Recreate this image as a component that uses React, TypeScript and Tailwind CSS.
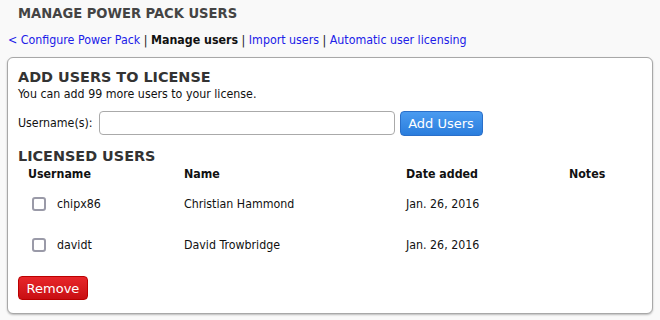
import React from 'react';

const users = [
  { username: 'chipx86', name: 'Christian Hammond', date: 'Jan. 26, 2016' },
  { username: 'davidt', name: 'David Trowbridge', date: 'Jan. 26, 2016' },
];

export default function App() {
  return (
    <div className="w-[660px] h-[320px] bg-[#f9f9f9] text-[#111] font-['DejaVu_Sans_Condensed','DejaVu_Sans',Verdana,sans-serif] text-[12.3px] overflow-hidden">
      {/* Page header */}
      <h1 className="pl-[18px] pt-[4px] h-[29px] text-[14.6px] font-bold text-[#444] leading-[18px]">
        MANAGE POWER PACK USERS
      </h1>
      <nav className="pl-[8px] pt-[2px] h-[28px] leading-[18px]">
        <a className="text-[#2020e8]">&lt; Configure Power Pack</a>
        <span> | </span>
        <b>Manage users</b>
        <span> | </span>
        <a className="text-[#2020e8]">Import users</a>
        <span> | </span>
        <a className="text-[#2020e8]">Automatic user licensing</a>
      </nav>

      {/* Panel */}
      <div className="mx-[7px] h-[257px] bg-white border border-[#a8a8a8] rounded-[6px] shadow-[0_1px_2px_rgba(0,0,0,0.25)] px-[10px] pt-[11px]">
        <h2 className="font-['DejaVu_Sans',sans-serif] text-[14.4px] font-bold text-[#333] leading-[17px]">ADD USERS TO LICENSE</h2>
        <p className="leading-[16px]">You can add 99 more users to your license.</p>

        <div className="flex items-center mt-[8px] h-[26px]">
          <label className="mr-[6px]">Username(s):</label>
          <input className="w-[296px] h-[24px] border border-[#aaa] rounded-[4px] bg-white" />
          <button className="ml-[5px] w-[83px] h-[25px] rounded-[4px] border border-[#2a6fc9] bg-gradient-to-b from-[#4a9bf0] to-[#2a7ddd] text-white font-['DejaVu_Sans',sans-serif] text-[13px] leading-none">
            Add Users
          </button>
        </div>

        <h2 className="mt-[12px] font-['DejaVu_Sans',sans-serif] text-[14.4px] font-bold text-[#333] leading-[17px]">LICENSED USERS</h2>

        <div className="grid grid-cols-[156px_222px_163px_1fr] pl-[10px] mt-[1px]">
          <div className="font-bold h-[17px] leading-[17px]">Username</div>
          <div className="font-bold leading-[17px]">Name</div>
          <div className="font-bold leading-[17px]">Date added</div>
          <div className="font-bold leading-[17px]">Notes</div>
          {users.map((u) => (
            <React.Fragment key={u.username}>
              <div className="flex items-center h-[41px] pl-[4px] pt-[1px]">
                <span className="w-[14px] h-[14px] border-2 border-[#9a9aa8] rounded-[3px] bg-white mr-[11px]" />
                {u.username}
              </div>
              <div className="flex items-center pt-[1px]">{u.name}</div>
              <div className="flex items-center pt-[1px]">{u.date}</div>
              <div />
            </React.Fragment>
          ))}
        </div>

        <button className="mt-[11px] w-[70px] h-[24px] rounded-[4px] border border-[#b00] bg-gradient-to-b from-[#e8262a] to-[#c80e12] text-white font-['DejaVu_Sans',sans-serif] text-[13px] leading-none">
          Remove
        </button>
      </div>
    </div>
  );
}
